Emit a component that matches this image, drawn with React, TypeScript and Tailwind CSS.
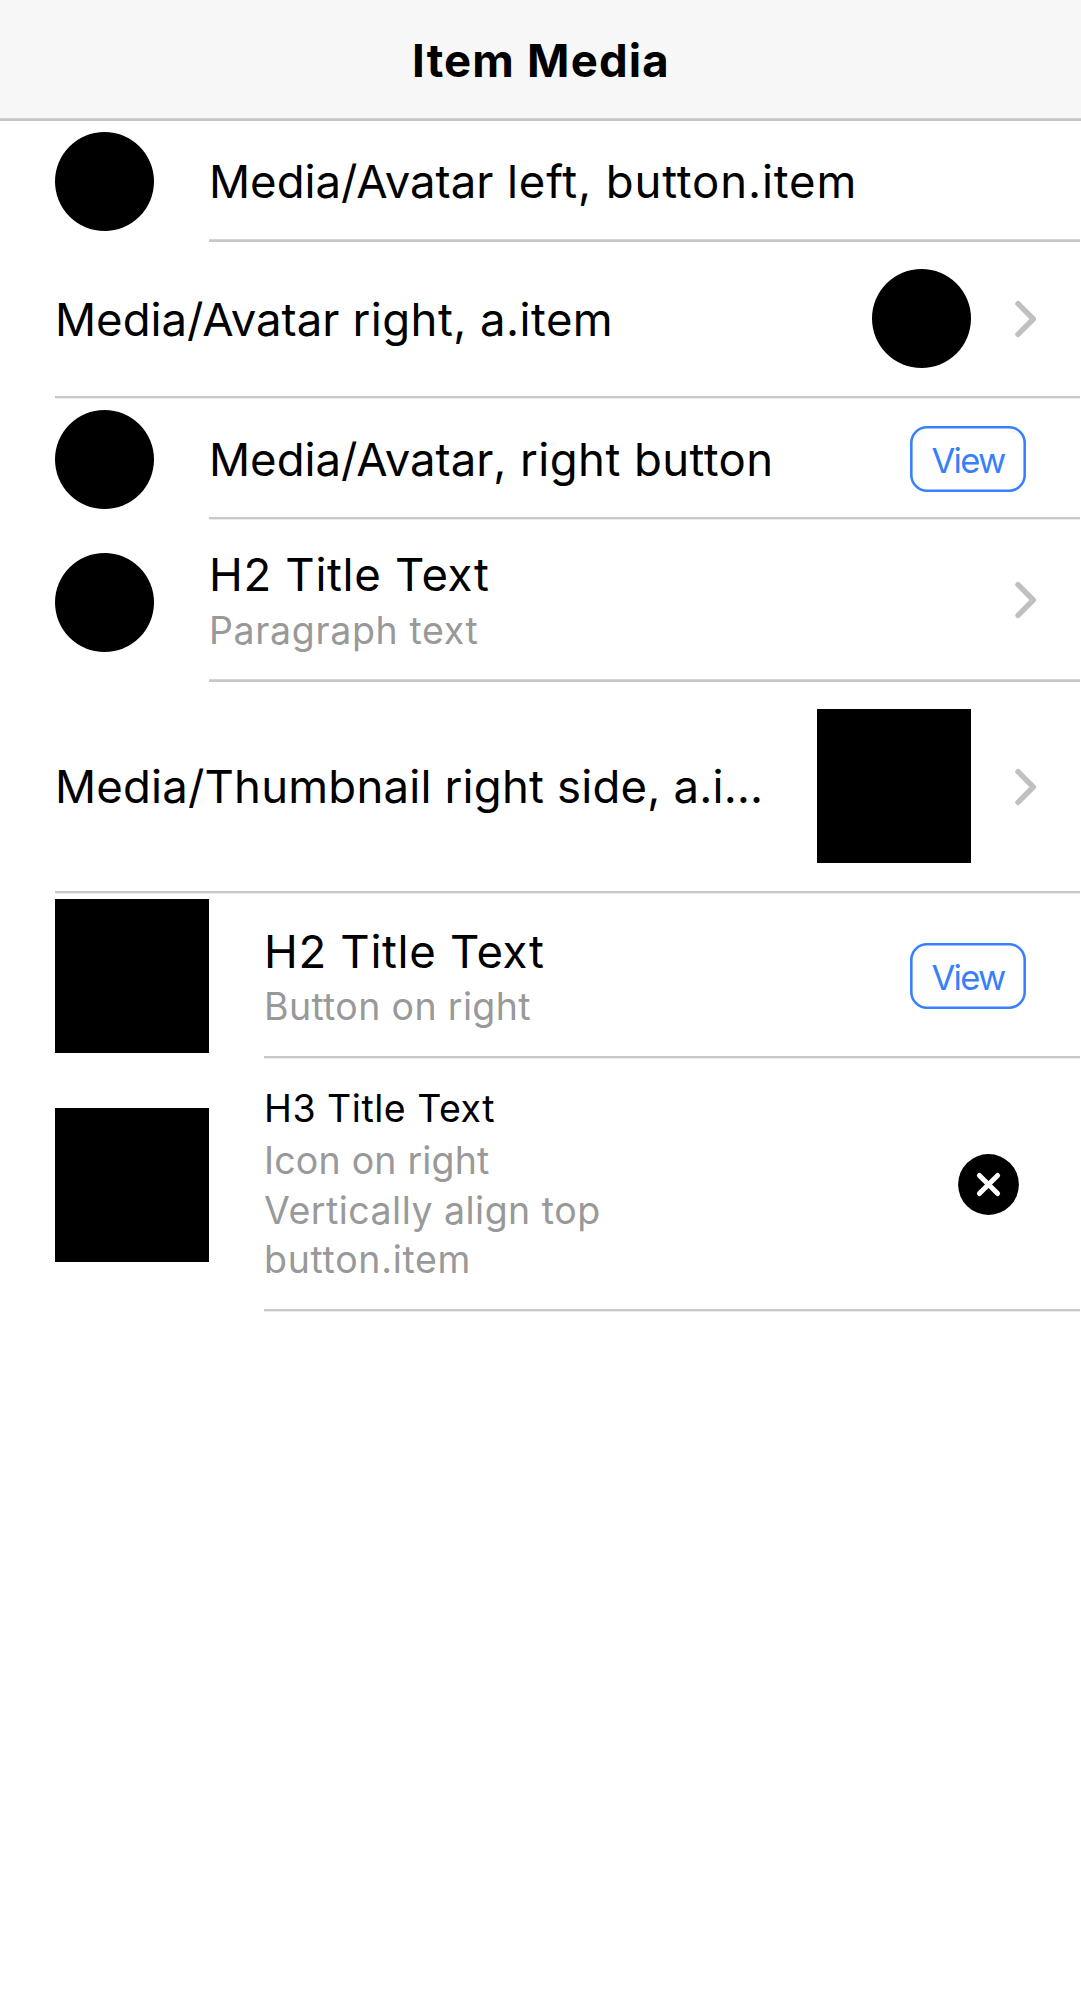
import type { ReactNode } from 'react';

function Divider({ soft = 'after' }: { soft?: 'before' | 'after' }) {
  return (
    <div className="mr-px flex flex-col">
      {soft === 'before' && <div className="h-px bg-[#d5d4d8]" />}
      <div className="h-[2px] bg-[#c8c7cc]" />
      {soft === 'after' && <div className="h-px bg-[#eaeaec]" />}
    </div>
  );
}

function Item({
  height,
  media,
  soft,
  children,
}: {
  height: string;
  media?: ReactNode;
  soft?: 'before' | 'after';
  children: ReactNode;
}) {
  return (
    <li className={`flex items-start pl-[55px] ${height}`}>
      {media}
      <div className="flex h-full min-w-0 flex-1 flex-col">
        <div className="flex min-h-0 flex-1 items-start">{children}</div>
        <Divider soft={soft} />
      </div>
    </li>
  );
}

const Avatar = ({ className }: { className: string }) => (
  <div className={`size-[99px] shrink-0 rounded-full bg-black ${className}`} />
);

const Thumbnail = ({ className }: { className: string }) => (
  <div className={`size-[154px] shrink-0 bg-black ${className}`} />
);

const Chevron = ({ className }: { className: string }) => (
  <svg
    viewBox="0 0 24 40"
    className={`h-[40px] w-[24px] shrink-0 ${className}`}
    fill="none"
    stroke="#c0c0c0"
    strokeWidth="5.4"
    strokeLinecap="round"
    strokeLinejoin="round"
  >
    <path d="M4 4.7 L19.3 20 L4 35.3" />
  </svg>
);

const ViewButton = ({ className }: { className: string }) => (
  <button
    className={`mr-[55px] flex h-[66px] w-[116px] shrink-0 rounded-[17px] pt-[14px] pl-[21.5px] text-[34.5px] leading-[41px] tracking-[-1.75px] text-[#387ffc] shadow-[inset_0_0_0_2.6px_#3880ff] ${className}`}
  >
    View
  </button>
);

const TITLE = 'whitespace-nowrap text-[45.5px] leading-[55px] text-black';
const SUB = 'whitespace-nowrap text-[37.5px] leading-[45px] text-[#999999]';

export default function App() {
  return (
    <div className="min-h-[1999px] w-[1081px] overflow-hidden bg-white font-['Inter',sans-serif]">
      <header className="flex h-[121px] flex-col bg-[#f7f7f7]">
        <h1 className="flex-1 pt-[33px] pl-[412px] text-[45.5px] leading-[55px] font-bold tracking-[1.2px] whitespace-nowrap text-black">
          Item Media
        </h1>
        <div className="h-px bg-[#d0d0d0]" />
        <div className="h-[2px] bg-[#c4c4c4]" />
      </header>
      <ul>
        <Item height="h-[121px]" soft="before" media={<Avatar className="mt-[11px] mr-[55px]" />}>
          <h2 className={`mt-[33px] flex-1 ${TITLE}`}>
            Media/Avatar<span className="tracking-[0.85px]"> left, button.item</span>
          </h2>
        </Item>
        <Item height="h-[157px]">
          <h2 className={`mt-[50px] flex-1 ${TITLE}`}>
            Media/Avatar<span className="tracking-[0.43px]"> right, a.item</span>
          </h2>
          <Avatar className="mt-[27.25px]" />
          <Chevron className="mt-[57px] mr-[43px] ml-[43px]" />
        </Item>
        <Item height="h-[121px]" media={<Avatar className="mt-[10.75px] mr-[55px]" />}>
          <h2 className={`mt-[33px] flex-1 ${TITLE}`}>
            Media/Avatar<span className="tracking-[0.41px]">, right button</span>
          </h2>
          <ViewButton className="mt-[27px]" />
        </Item>
        <Item height="h-[162px]" soft="before" media={<Avatar className="mt-[32.75px] mr-[55px]" />}>
          <div className="flex-1 pt-[27px]">
            <h2 className={`tracking-[0.664px] ${TITLE}`}>H2 Title Text</h2>
            <p className={`mt-[6px] tracking-[0.649px] ${SUB}`}>Paragraph text</p>
          </div>
          <Chevron className="mt-[59.5px] mr-[43px]" />
        </Item>
        <Item height="h-[212px]">
          <h2 className={`mt-[77px] flex-1 tracking-[0.185px] ${TITLE}`}>Media/Thumbnail right side, a.i…</h2>
          <Thumbnail className="mt-[27px]" />
          <Chevron className="mt-[84.5px] mr-[43px] ml-[43px]" />
        </Item>
        <Item height="h-[165px]" media={<Thumbnail className="mt-[5.25px] mr-[55px]" />}>
          <div className="flex-1 pt-[30px]">
            <h2 className={`tracking-[0.664px] ${TITLE}`}>H2 Title Text</h2>
            <p className={`mt-[5px] tracking-[0.35px] ${SUB}`}>Button on right</p>
          </div>
          <ViewButton className="mt-[49px]" />
        </Item>
        <Item height="h-[253px]" media={<Thumbnail className="mt-[49.25px] mr-[55px]" />}>
          <div className="flex-1 pt-[27px]">
            <h3 className="text-[37.5px] leading-[45px] tracking-[0.514px] whitespace-nowrap text-black">
              H3 Title Text
            </h3>
            <p className={`mt-[7px] tracking-[0.19px] ${SUB}`}>Icon on right</p>
            <p className={`mt-[5px] tracking-[0.48px] ${SUB}`}>Vertically align top</p>
            <p className={`mt-[4px] tracking-[0.69px] ${SUB}`}>button.item</p>
          </div>
          <svg viewBox="0 0 61 61" className="mt-[94.5px] mr-[62px] size-[61px] shrink-0">
            <circle cx="30.5" cy="30.5" r="30.4" fill="black" />
            <path
              d="M21.4 21.4 L39.6 39.6 M39.6 21.4 L21.4 39.6"
              stroke="white"
              strokeWidth="5"
              strokeLinecap="round"
            />
          </svg>
        </Item>
      </ul>
    </div>
  );
}
